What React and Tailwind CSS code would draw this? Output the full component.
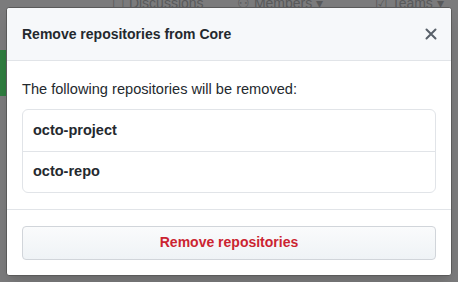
import React from "react";

const repos = ["octo-project", "octo-repo"];

const App = () => {
  return (
    <div
      className="relative w-[458px] h-[282px] overflow-hidden bg-[#7b7b7c]"
      style={{ fontFamily: '"Liberation Sans", Arial, sans-serif' }}
    >
      {/* dimmed page behind the dialog */}
      <div className="flex items-end h-[10px] pl-[112px] text-[14px] leading-[14px] text-[#58595a]">
        <span className="w-[125px]">☐ Discussions</span>
        <span className="w-[138px]">⚇ Members ▾</span>
        <span>☑ Teams ▾</span>
      </div>
      <div className="absolute left-0 top-[50px] w-[6px] h-[46px] bg-[#2f7d3f]" />

      {/* dialog */}
      <div className="absolute left-[6px] top-[7px] w-[446px] h-[269px] bg-white rounded-[3px] border border-[#5a5a5a] shadow-lg flex flex-col">
        <div className="flex items-center justify-between h-[53px] pl-[15px] pr-[12px] bg-[#f6f8fa] border-b border-[#e1e4e8] rounded-t-[3px]">
          <h2 className="text-[14px] font-bold text-[#24292e]">
            Remove repositories from Core
          </h2>
          <svg width="16" height="16" viewBox="0 0 16 16">
            <path
              d="M3.5 3.5l9 9M12.5 3.5l-9 9"
              stroke="#586069"
              strokeWidth="2"
              strokeLinecap="round"
            />
          </svg>
        </div>
        <div className="px-[15px] pt-[18px] pb-[16px] border-b border-[#e1e4e8]">
          <p className="text-[14.6px] text-[#24292e] mb-[8px]">
            The following repositories will be removed:
          </p>
          <ul className="border border-[#e1e4e8] rounded-[6px]">
            {repos.map((repo, i) => (
              <li
                key={repo}
                className={`h-[41px] flex items-center px-[10px] text-[14.5px] font-bold text-[#24292e] ${
                  i > 0 ? "border-t border-[#e1e4e8]" : ""
                }`}
              >
                {repo}
              </li>
            ))}
          </ul>
        </div>
        <div className="px-[15px] pt-[16px]">
          <button className="w-full h-[34px] rounded-[4px] border border-[#d1d5da] bg-gradient-to-b from-[#fafbfc] to-[#eff3f6] text-[14px] font-bold text-[#cb2431]">
            Remove repositories
          </button>
        </div>
      </div>
    </div>
  );
};

export default App;
